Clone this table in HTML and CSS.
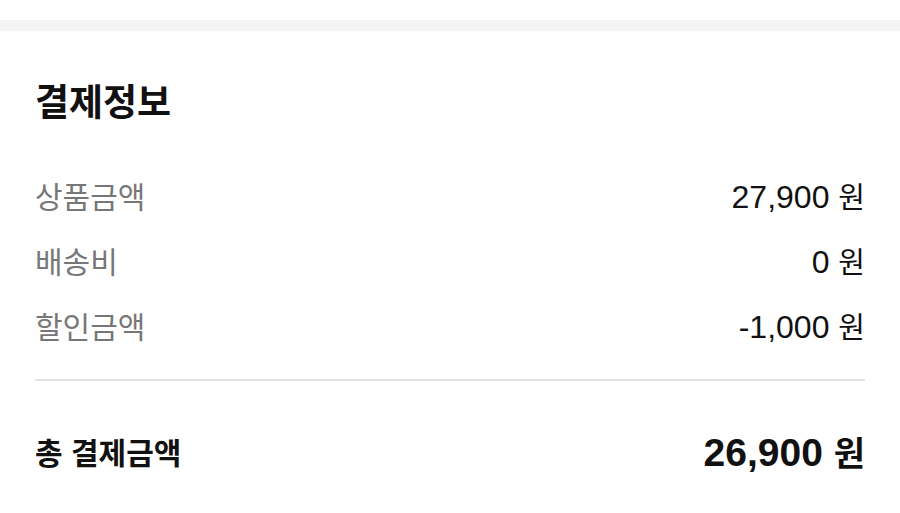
FILE: index.html
```html
<!DOCTYPE html>
<html lang="ko">
<head>
<meta charset="utf-8">
<link rel="stylesheet" href="styles.css">
</head>
<body>
<div class="top"></div>
<div class="band"></div>
<section class="pay">
  <h2 class="title">결제정보</h2>
  <div class="rows">
    <div class="row"><span class="label">상품금액</span><span class="value">27,900 <span class="unit">원</span></span></div>
    <div class="row"><span class="label">배송비</span><span class="value">0 <span class="unit">원</span></span></div>
    <div class="row"><span class="label">할인금액</span><span class="value">-1,000 <span class="unit">원</span></span></div>
  </div>
  <hr class="divider">
  <div class="total">
    <span class="total-label">총 결제금액</span>
    <span class="total-value">26,900 <span class="total-unit">원</span></span>
  </div>
</section>
</body>
</html>
```

FILE: styles.css
```css
html, body {
  margin: 0;
  padding: 0;
  background: #fff;
}
body {
  width: 900px;
  height: 513px;
  overflow: hidden;
  font-family: "Noto Sans CJK KR", "Noto Sans", sans-serif;
  color: #111;
}
.top {
  height: 20px;
  background: #fff;
}
.band {
  height: 11px;
  background: #f4f4f4;
}
.pay {
  padding: 49px 35px 0 35px;
}
.title {
  margin: 0;
  font-size: 37px;
  line-height: 40px;
  font-weight: 700;
  color: #111;
}
.rows {
  margin-top: 42px;
  display: flex;
  flex-direction: column;
}
.row {
  height: 65px;
  display: flex;
  align-items: center;
  justify-content: space-between;
}
.label {
  font-size: 30px;
  color: #777;
}
.value {
  font-family: "Liberation Sans", Arial, sans-serif;
  font-size: 32px;
  color: #111;
}
.unit {
  font-family: "Noto Sans CJK KR", sans-serif;
  font-size: 29px;
}
.divider {
  margin: 22px 0 0;
  border: 0;
  border-top: 2px solid #e2e2e2;
  height: 0;
}
.total {
  margin-top: 45px;
  height: 50px;
  display: flex;
  align-items: center;
  justify-content: space-between;
}
.total-label {
  font-size: 30px;
  font-weight: 700;
  color: #111;
}
.total-value {
  font-family: "Liberation Sans", Arial, sans-serif;
  font-weight: 700;
  font-size: 39px;
  color: #111;
}
.total-unit {
  font-family: "Noto Sans CJK KR", sans-serif;
  font-size: 34px;
}
```
